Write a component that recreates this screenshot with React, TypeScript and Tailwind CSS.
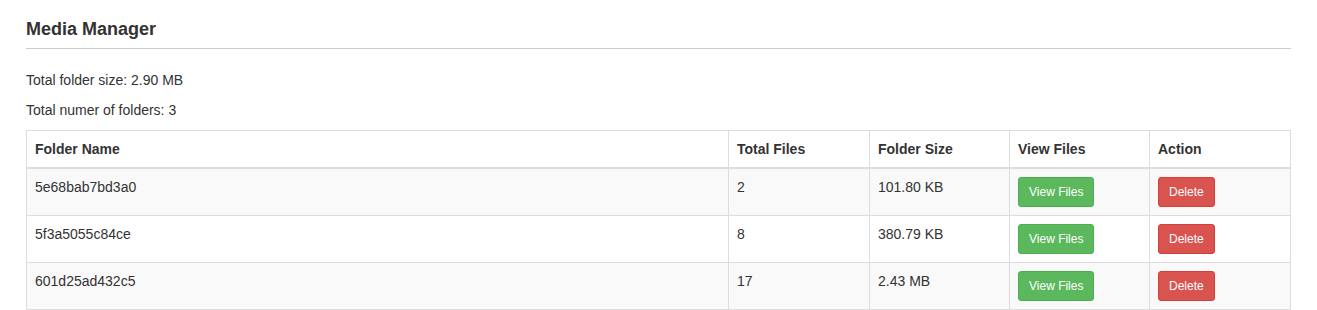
const folders = [
  { name: '5e68bab7bd3a0', files: 2, size: '101.80 KB' },
  { name: '5f3a5055c84ce', files: 8, size: '380.79 KB' },
  { name: '601d25ad432c5', files: 17, size: '2.43 MB' },
];

const th = 'border border-[#ddd] border-b-2 p-2 text-left font-bold leading-5 align-bottom';
const td = 'border border-[#ddd] p-2 leading-5 align-top';

export default function App() {
  return (
    <div className="px-[26px] pt-[19px] bg-white text-[#333] text-[14px] font-['Liberation_Sans',Arial,sans-serif]">
      <div className="border-b border-[#ccc] pb-[9px] w-[1265px]">
        <h4 className="text-[18px] leading-5 font-bold">Media Manager</h4>
      </div>
      <p className="mt-[21px] leading-5 mb-[10px]">Total folder size: 2.90 MB</p>
      <p className="leading-5 mb-[10px]">Total numer of folders: 3</p>
      <table className="table-fixed w-[1264px] border-collapse">
        <thead>
          <tr>
            <th className={`${th} w-[702px]`}>Folder Name</th>
            <th className={`${th} w-[141px]`}>Total Files</th>
            <th className={`${th} w-[140px]`}>Folder Size</th>
            <th className={`${th} w-[140px]`}>View Files</th>
            <th className={`${th} w-[141px]`}>Action</th>
          </tr>
        </thead>
        <tbody>
          {folders.map((f, i) => (
            <tr key={f.name} className={i % 2 === 0 ? 'bg-[#f9f9f9]' : 'bg-white'}>
              <td className={td}>{f.name}</td>
              <td className={td}>{f.files}</td>
              <td className={td}>{f.size}</td>
              <td className={td}>
                <button className="inline-block text-white text-[12px] leading-[18px] px-[10px] py-[5px] border border-[#4cae4c] bg-[#5cb85c] rounded-[3px]">
                  View Files
                </button>
              </td>
              <td className={td}>
                <button className="inline-block text-white text-[12px] leading-[18px] px-[10px] py-[5px] border border-[#d43f3a] bg-[#d9534f] rounded-[3px]">
                  Delete
                </button>
              </td>
            </tr>
          ))}
        </tbody>
      </table>
    </div>
  );
}
